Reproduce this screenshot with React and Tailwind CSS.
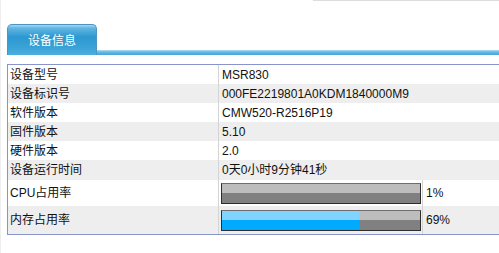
import React from "react";

const rows = [
  { label: "设备型号", value: "MSR830", h: "h-[19px]" },
  { label: "设备标识号", value: "000FE2219801A0KDM1840000M9", h: "h-[19px]" },
  { label: "软件版本", value: "CMW520-R2516P19", h: "h-[19px]" },
  { label: "固件版本", value: "5.10", h: "h-[19px]" },
  { label: "硬件版本", value: "2.0", h: "h-[19px]" },
  { label: "设备运行时间", value: "0天0小时9分钟41秒", h: "h-[20px]" },
];

const UsageBar = ({ percent }) => (
  <div className="relative ml-[2px] h-[21px] w-[200px] border border-[#2e2e2e] border-t-[#6e6e6e]">
    <div className="flex h-full flex-col">
      <div className="h-1/2 bg-[#bdbdbd]" />
      <div className="h-1/2 bg-[#808080]" />
    </div>
    {percent > 1 && (
      <div
        className="absolute top-0 left-0 flex h-full flex-col"
        style={{ width: `${percent}%` }}
      >
        <div className="h-1/2 bg-[#80d4ff]" />
        <div className="h-1/2 bg-[#00aaff]" />
      </div>
    )}
  </div>
);

const App = () => {
  return (
    <div className="h-[253px] w-[499px] overflow-hidden border-l border-[#efefef] bg-white font-['Liberation_Sans','Noto_Sans_CJK_SC',sans-serif] text-[12px] text-[#111]">
      <div className="ml-[312px] h-px bg-[#dddddd]" />

      {/* tab header */}
      <div className="mt-[23px] flex items-end pl-[6px]">
        <div className="flex h-[31px] w-[90px] items-center justify-center rounded-t-[5px] border border-b-0 border-[#4a95c4] bg-[linear-gradient(to_bottom,#a8d7f1_0%,#62b6e2_10%,#2d98d0_40%,#3aa2d7_75%,#4caee0_100%)] pt-[2px] text-white">
          设备信息
        </div>
        <div className="h-[5px] flex-1 bg-[linear-gradient(to_bottom,#b6ddf2,#66b8e3_40%,#42a5da)]" />
      </div>

      {/* info table */}
      <div className="mt-[9px] ml-[6px] w-[530px] border border-[#8a94cc]">
        {rows.map((row, i) => (
          <div
            key={row.label}
            className={`flex ${row.h} items-center ${
              i % 2 === 1 ? "bg-[#eeeeee]" : "bg-white"
            }`}
          >
            <div className="flex h-full w-[211px] items-center border-r border-[#d4d4d4] pl-[2px]">
              {row.label}
            </div>
            <div className="pl-[3px]">{row.value}</div>
          </div>
        ))}

        <div className="flex h-[26px] items-center bg-white">
          <div className="flex h-full w-[211px] items-center border-r border-[#d4d4d4] pl-[2px]">
            CPU占用率
          </div>
          <div className="flex h-full w-[203px] items-center">
            <UsageBar percent={1} />
          </div>
          <div className="flex h-full items-center border-l border-[#d4d4d4] pl-[3px]">
            1%
          </div>
        </div>

        <div className="flex h-[28px] items-center bg-[#eeeeee]">
          <div className="flex h-full w-[211px] items-center border-r border-[#d4d4d4] pl-[2px]">
            内存占用率
          </div>
          <div className="flex h-full w-[203px] items-center">
            <UsageBar percent={69} />
          </div>
          <div className="flex h-full items-center border-l border-[#d4d4d4] pl-[3px]">
            69%
          </div>
        </div>
      </div>
    </div>
  );
};

export default App;
